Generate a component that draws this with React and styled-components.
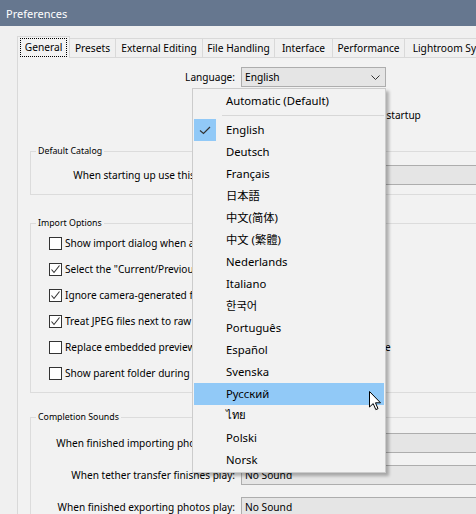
import React from "react";
import styled, { createGlobalStyle } from "styled-components";

const UI_FONT = `"Noto Sans", "Noto Sans CJK JP", "Noto Sans CJK SC", "Noto Sans CJK KR", "DejaVu Sans", sans-serif`;

const GlobalStyle = createGlobalStyle`
  html, body {
    margin: 0;
    padding: 0;
    background: #f0f0f0;
  }
  body {
    font-family: ${UI_FONT};
  }
`;

const Window = styled.div`
  position: relative;
  width: 476px;
  height: 514px;
  overflow: hidden;
  background: #f0f0f0;
  display: flex;
  flex-direction: column;
  font-family: ${UI_FONT};
  color: #000;
`;

const TitleBar = styled.div`
  flex: none;
  height: 26px;
  display: flex;
  align-items: center;
  padding-left: 6px;
  background: #66778f;
  color: #fff;
  font-size: 11px;
`;

const Body = styled.div`
  flex: 1;
  min-height: 0;
  display: flex;
  flex-direction: column;
  padding: 10px 0 0 17px;
`;

const TabStrip = styled.div`
  flex: none;
  position: relative;
  z-index: 1;
  display: flex;
  align-items: flex-end;
  height: 21px;
`;

const Tab = styled.div`
  box-sizing: border-box;
  flex: none;
  width: ${({ $w }) => $w}px;
  height: ${({ $active }) => ($active ? 22 : 19)}px;
  margin-bottom: ${({ $active }) => ($active ? -1 : 0)}px;
  margin-left: -1px;
  &:first-child {
    margin-left: 0;
  }
  display: flex;
  align-items: center;
  justify-content: center;
  border: 1px solid #d9d9d9;
  border-bottom: none;
  background: ${({ $active }) => ($active ? "#f2f2f2" : "#f0f0f0")};
  font-size: 10.2px;
  white-space: nowrap;
`;

const FocusLabel = styled.span`
  padding: 1px 4px 2px;
  outline: 1px dotted #000;
  outline-offset: 0;
`;

const Pane = styled.div`
  flex: 1;
  box-sizing: border-box;
  width: 620px;
  display: flex;
  flex-direction: column;
  border-top: 1px solid #d9d9d9;
  border-left: 1px solid #d9d9d9;
  background: #f2f2f2;
`;

const FieldRow = styled.div`
  display: flex;
  align-items: center;
  height: 20px;
  margin-top: ${({ $top }) => $top || 0}px;
`;

const FieldLabel = styled.div`
  flex: none;
  box-sizing: border-box;
  width: ${({ $w }) => $w}px;
  padding-right: 6px;
  text-align: right;
  font-size: 10.1px;
  white-space: nowrap;
`;

const Combo = styled.div`
  box-sizing: border-box;
  flex: none;
  position: relative;
  width: ${({ $w }) => $w}px;
  height: 20px;
  display: flex;
  align-items: center;
  padding-left: 3px;
  border: 1px solid #adadad;
  background: #e5e5e5;
  font-size: 10.2px;
  white-space: nowrap;
`;

const Chevron = styled.svg`
  position: absolute;
  right: 5px;
  top: 7px;
`;

const CheckRow = styled.label`
  display: flex;
  align-items: center;
  gap: 3px;
  height: 16px;
  padding-left: ${({ $indent }) => $indent}px;
  margin-top: ${({ $top }) => $top || 0}px;
  font-size: 10.1px;
  white-space: nowrap;
`;

const Box = styled.span`
  flex: none;
  box-sizing: border-box;
  width: 13px;
  height: 13px;
  display: flex;
  align-items: center;
  justify-content: center;
  border: 1px solid #333;
  background: #fff;
`;

const Group = styled.fieldset`
  box-sizing: border-box;
  width: 580px;
  min-width: 0;
  margin: ${({ $top }) => $top}px 0 0 12px;
  padding: 0 0 ${({ $bottom }) => $bottom}px 0;
  border: 1px solid #dcdcdc;
  display: flex;
  flex-direction: column;
  gap: ${({ $gap }) => $gap || 0}px;
`;

const GroupTitle = styled.legend`
  margin-left: 5px;
  padding: 0 2px;
  font-size: 8.8px;
  line-height: 12px;
`;

const Menu = styled.div`
  position: absolute;
  left: 192px;
  top: 88px;
  z-index: 5;
  box-sizing: border-box;
  width: 194px;
  padding: 1px;
  border: 1px solid #cccccc;
  background: #f2f2f2;
  box-shadow: 3px 3px 3px rgba(0, 0, 0, 0.28);
  font-size: 11.3px;
`;

const MenuItem = styled.div`
  display: flex;
  align-items: center;
  height: 22px;
  background: ${({ $hover }) => ($hover ? "#91c9f7" : "transparent")};
  white-space: nowrap;
`;

const MenuText = styled.span`
  margin-bottom: 2px;
`;

const CheckCell = styled.span`
  flex: none;
  width: 22px;
  height: 22px;
  margin-right: 10px;
  display: flex;
  align-items: center;
  justify-content: center;
  background: ${({ $on }) => ($on ? "#91c9f7" : "transparent")};
`;

const MenuSeparator = styled.div`
  height: 7px;
  display: flex;
  align-items: center;
  padding-left: 28px;
  &::after {
    content: "";
    flex: 1;
    height: 1px;
    background: #d7d7d7;
  }
`;

const Cursor = styled.svg`
  position: absolute;
  left: 369px;
  top: 391px;
  z-index: 6;
`;

const TABS = [
  ["General", 53],
  ["Presets", 47],
  ["External Editing", 88],
  ["File Handling", 73],
  ["Interface", 59],
  ["Performance", 73],
  ["Lightroom Sync", 92],
];

const IMPORT_OPTIONS = [
  ["Show import dialog when a memory card is detected", false],
  ['Select the "Current/Previous Import" collection during import', true],
  ["Ignore camera-generated folder names when naming folders", true],
  ["Treat JPEG files next to raw files as separate photos", true],
  ["Replace embedded previews with standard previews during idle time", false],
  ["Show parent folder during import", false],
];

const SOUNDS = [
  "When finished importing photos play:",
  "When tether transfer finishes play:",
  "When finished exporting photos play:",
];

const LANGUAGES = [
  "English",
  "Deutsch",
  "Français",
  "日本語",
  "中文(简体)",
  "中文 (繁體)",
  "Nederlands",
  "Italiano",
  "한국어",
  "Português",
  "Español",
  "Svenska",
  "Русский",
  "ไทย",
  "Polski",
  "Norsk",
];

const ChevronIcon = () => (
  <Chevron width="9" height="5" viewBox="0 0 9 5">
    <polyline points="0.5,0.5 4.5,4.5 8.5,0.5" fill="none" stroke="#333" strokeWidth="1" />
  </Chevron>
);

const Checkbox = ({ checked }) => (
  <Box>
    {checked && (
      <svg width="11" height="11" viewBox="0 0 11 11">
        <polyline points="1.5,5.5 4,8.5 9.5,1.5" fill="none" stroke="#333" strokeWidth="1.1" />
      </svg>
    )}
  </Box>
);

const LanguageMenu = () => (
  <Menu>
    <MenuItem>
      <CheckCell />
      <MenuText>Automatic (Default)</MenuText>
    </MenuItem>
    <MenuSeparator />
    {LANGUAGES.map((lang, i) => (
      <MenuItem key={lang} $hover={lang === "Русский"}>
        <CheckCell $on={i === 0}>
          {i === 0 && (
            <svg width="12" height="9" viewBox="0 0 12 9">
              <polyline points="1,4.5 4.5,7.5 11,1" fill="none" stroke="#333" strokeWidth="1.2" />
            </svg>
          )}
        </CheckCell>
        <MenuText>{lang}</MenuText>
      </MenuItem>
    ))}
  </Menu>
);

export default function App() {
  return (
    <Window>
      <GlobalStyle />
      <TitleBar>Preferences</TitleBar>
      <Body>
        <TabStrip>
          {TABS.map(([name, w], i) => (
            <Tab key={name} $w={w} $active={i === 0}>
              {i === 0 ? <FocusLabel>{name}</FocusLabel> : name}
            </Tab>
          ))}
        </TabStrip>
        <Pane>
          <FieldRow $top={9}>
            <FieldLabel $w={223}>Language:</FieldLabel>
            <Combo $w={145}>
              English
              <ChevronIcon />
            </Combo>
          </FieldRow>
          <CheckRow $indent={223} $top={20}>
            <Checkbox checked />
            Show splash screen during startup
          </CheckRow>

          <Group $top={22} $bottom={9}>
            <GroupTitle>Default Catalog</GroupTitle>
            <FieldRow $top={8}>
              <FieldLabel $w={210}>When starting up use this catalog:</FieldLabel>
              <Combo $w={400}>Load most recent catalog</Combo>
            </FieldRow>
          </Group>

          <Group $top={22} $bottom={11} $gap={10}>
            <GroupTitle>Import Options</GroupTitle>
            {IMPORT_OPTIONS.map(([text, checked], i) => (
              <CheckRow key={text} $indent={18} $top={i === 0 ? 6 : 0}>
                <Checkbox checked={checked} />
                {text}
              </CheckRow>
            ))}
          </Group>

          <Group $top={18} $bottom={20} $gap={12}>
            <GroupTitle>Completion Sounds</GroupTitle>
            {SOUNDS.map((text, i) => (
              <FieldRow key={text} $top={i === 0 ? 10 : 0}>
                <FieldLabel $w={210}>{text}</FieldLabel>
                <Combo $w={400}>No Sound</Combo>
              </FieldRow>
            ))}
          </Group>
        </Pane>
      </Body>
      <LanguageMenu />
      <Cursor width="13" height="20" viewBox="0 0 13 20">
        <path d="M0.5,0.5 L0.5,16 L4.2,12.6 L6.8,18.6 L9,17.7 L6.5,11.8 L11.5,11.8 Z" fill="#fff" stroke="#000" strokeWidth="1" strokeLinejoin="round" />
      </Cursor>
    </Window>
  );
}
